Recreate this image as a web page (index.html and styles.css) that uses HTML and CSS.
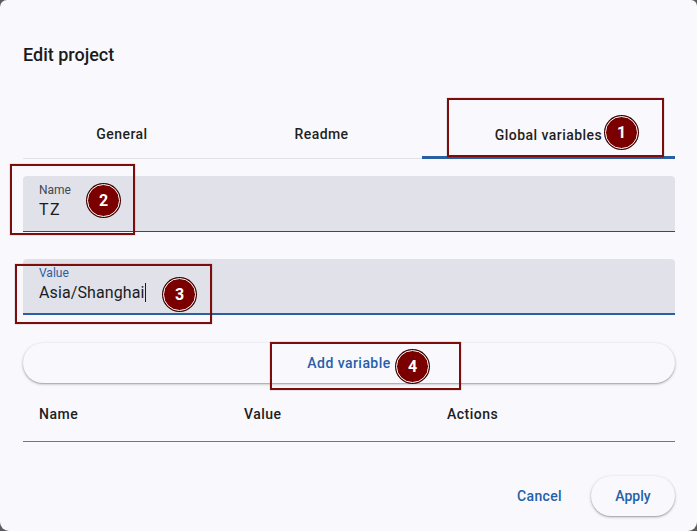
FILE: index.html
```html
<!DOCTYPE html>
<html lang="en">
<head>
    <meta charset="UTF-8">
    <meta name="viewport" content="width=device-width, initial-scale=1.0">
    <title>Edit project</title>
    <link rel="stylesheet" href="styles.css">
</head>
<body>
    <div class="dialog">
        <h1 class="title">Edit project</h1>

        <!-- tabs -->
        <div class="tabs">
            <div class="tab tab-general">General</div>
            <div class="tab tab-readme">Readme</div>
            <div class="tab tab-global active">Global variables</div>
        </div>

        <!-- fields -->
        <div class="field">
            <span class="field-label">Name</span>
            <span class="field-value">TZ</span>
        </div>
        <div class="field focused">
            <span class="field-label">Value</span>
            <span class="field-value">Asia/Shanghai<i class="caret"></i></span>
        </div>

        <button type="button" class="add-btn">Add variable</button>

        <div class="table-head">
            <span>Name</span>
            <span>Value</span>
            <span>Actions</span>
        </div>

        <div class="actions">
            <button type="button" class="text-btn">Cancel</button>
            <button type="button" class="apply-btn">Apply</button>
        </div>

        <!-- annotation marks -->
        <div class="mark-box box1"></div>
        <div class="mark-box box2"></div>
        <div class="mark-box box3"></div>
        <div class="mark-box box4"></div>
        <span class="badge b1">1</span>
        <span class="badge b2">2</span>
        <span class="badge b3">3</span>
        <span class="badge b4">4</span>
    </div>
</body>
</html>
```

FILE: styles.css
```css
* {margin:0;padding:0;box-sizing:border-box;}
html, body {height:100%;}
body {background:#5c5c5c;font-family:Roboto, "Liberation Sans", sans-serif;color:#1b1b1f;overflow:hidden;}

.dialog {position:relative;width:697px;height:531px;background:#f9f9fd;
         padding:0 22px 0 23px;border-radius:7px 6px 9px 9px;}

.title {font-size:18px;font-weight:500;line-height:24px;padding-top:43px;letter-spacing:0;}

/* tabs */
.tabs {display:flex;margin-top:43px;height:49px;border-bottom:1px solid #e2e2e8;}
.tab {font-size:14px;font-weight:500;letter-spacing:0.45px;display:flex;align-items:center;
      justify-content:center;color:#1f1f23;height:48px;}
.tab-general {width:198px;}
.tab-readme {width:201px;}
.tab-global {flex:1;}
.tab.active {border-bottom:3px solid #2a5fa3;height:49px;margin-bottom:-1px;padding-top:3px;}

/* text fields */
.field {display:flex;flex-direction:column;height:56px;background:#e1e2e9;border-radius:4px 4px 0 0;
        padding:6px 16px 0;border-bottom:1px solid #44474e;margin-top:17px;}
.field + .field {margin-top:27px;}
.field-label {font-size:12px;line-height:16px;color:#44474e;}
.field-value {font-size:16px;line-height:24px;color:#1b1b1f;letter-spacing:0.1px;}
.field:first-child .field-value, .tabs + .field .field-value {letter-spacing:1.5px;}
.field.focused {border-bottom:2px solid #2a5fa3;}
.field.focused .field-label {color:#2a5fa3;}
.caret {display:inline-block;width:1px;height:19px;background:#1b1b1f;vertical-align:-4px;margin-left:1px;}

/* add variable */
.add-btn {display:block;width:100%;height:40px;margin-top:28px;border:none;border-radius:20px;
          background:#f9f9fd;box-shadow:0 1px 3px rgba(0,0,0,0.3), 0 1px 1px rgba(0,0,0,0.12);
          font-family:inherit;font-size:14px;font-weight:500;color:#2560a8;letter-spacing:0.45px;}

/* table header */
.table-head {display:grid;grid-template-columns:205px 203px 1fr;height:56px;margin-top:3px;
             align-items:center;border-bottom:1px solid #74777f;font-size:14px;font-weight:500;
             letter-spacing:0.5px;color:#202024;}
.table-head span {padding-left:16px;}

/* footer */
.actions {display:flex;justify-content:flex-end;align-items:center;gap:17px;margin-top:34px;}
.text-btn {border:none;background:none;font-family:inherit;font-size:14px;font-weight:500;
           color:#2560a8;padding:0 12px;height:40px;letter-spacing:0.35px;}
.apply-btn {border:none;height:40px;width:84px;border-radius:20px;background:#f9f9fd;
            box-shadow:0 1px 3px rgba(0,0,0,0.3), 0 1px 1px rgba(0,0,0,0.12);
            font-family:inherit;font-size:14px;font-weight:500;color:#2560a8;}

/* annotation overlay */
.mark-box {position:absolute;border:2px solid #7d0c0c;box-shadow:0 0 1px rgba(60,0,0,0.5);}
.box1 {left:447px;top:98px;width:217px;height:59px;}
.box2 {left:10px;top:164px;width:125px;height:71px;}
.box3 {left:15px;top:264px;width:197px;height:60px;}
.box4 {left:270px;top:342px;width:191px;height:48px;}

.badge {position:absolute;width:33px;height:33px;border-radius:50%;background:#7a0000;
        border:1.5px solid #fff;box-shadow:0 0 0 1px #3a0000;color:#fff;
        font-family:Roboto, "Liberation Sans", sans-serif;font-weight:700;font-size:16px;
        display:flex;align-items:center;justify-content:center;}
.b1 {left:605px;top:116px;}
.b2 {left:87px;top:184px;}
.b3 {left:163px;top:278px;}
.b4 {left:396px;top:350px;}
```
